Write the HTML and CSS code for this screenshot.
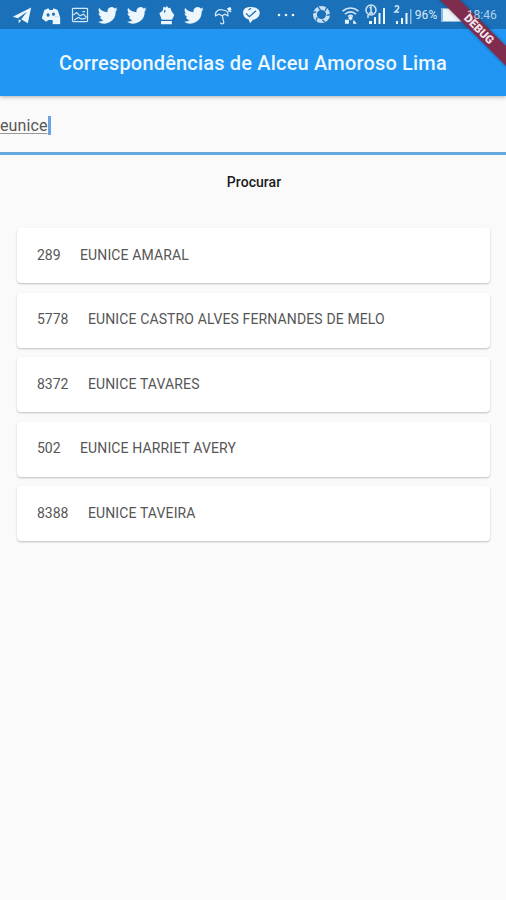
FILE: index.html
```html
<!DOCTYPE html>
<html lang="pt">
<head>
<meta charset="utf-8">
<title>Correspondências</title>
<link rel="stylesheet" href="styles.css">
</head>
<body>
<svg class="defs" width="0" height="0"><defs>
<path id="bird" d="M23.6 4.9c-.9.4-1.800.7-2.800.8 1-.6 1.800-1.600 2.200-2.700-.9.6-2 1-3.100 1.200a4.900 4.900 0 0 0-8.400 4.500C7.400 8.500 3.800 6.500 1.400 3.600c-1.300 2.300-.7 5.100 1.500 6.600-.8 0-1.600-.2-2.200-.6 0 2.300 1.600 4.400 3.900 4.900-.7.2-1.500.2-2.200.1.600 2 2.400 3.400 4.600 3.400A9.900 9.900 0 0 1-.3 20a13.900 13.900 0 0 0 21.500-12.400c1-.7 1.800-1.600 2.400-2.700z"/>
</defs></svg>
<header class="top">
  <div class="status">
    <div class="notices">
      <svg viewBox="0 0 24 24"><path d="M1 14 23 3 19 22 11 17 18 8 7 16zM8 17l3 2-3 3z"/></svg>
      <svg viewBox="0 0 24 24"><path d="M4 6 9 4l1 2h4l1-2 5 2 3 9-5 5-3-2H9l-3 2-5-4z"/><ellipse class="cut" cx="8.500" cy="12" rx="1.800" ry="2"/><ellipse class="cut" cx="15" cy="11" rx="1.800" ry="2"/><path d="M14 15h9v8h-9z"/><path class="line thin" d="M16 15v-1h5v1"/></svg>
      <svg viewBox="0 0 24 24"><rect class="line thin" x="3" y="4" width="18" height="16" rx="1"/><path class="line thin" d="m4 12 4-3 4 4 4-2 4 4M5 18l5-3 4 2 5-1M15 8h3"/></svg>
      <svg viewBox="0 0 24 24"><use href="#bird"/></svg>
      <svg viewBox="0 0 24 24"><use href="#bird"/></svg>
      <svg viewBox="0 0 24 24"><path d="m4 10 4-3 1-5 3 1 1-2 2 3 2-1 2 5 3 4-3 6H7zM6 19h13v4H6z"/><path class="cutline" d="M6 18.500h13M10 9l1-3"/></svg>
      <svg viewBox="0 0 24 24"><use href="#bird"/></svg>
      <svg viewBox="0 0 24 24"><path class="line thin" d="M3 13c-1-5 4-9 9-7 4 0 7 3 6 7l-4-2-3 2-4-2zM11 12l2 9c0 2-4 2-4 0M17 5l4-2M18 7l4 1"/><circle cx="20" cy="5" r="2"/></svg>
      <svg viewBox="0 0 24 24"><path d="M5 4c5-3 14-2 17 3 2 6-3 10-8 11l-3 4-2-5C3 16 0 8 5 4z"/><path class="cutline" d="m6 10 4 4 8-7M9 6l3-2"/></svg>
    </div>
    <svg class="dots" viewBox="0 0 20 20"><circle cx="3" cy="10" r="1.300"/><circle cx="10" cy="10" r="1.300"/><circle cx="17" cy="10" r="1.300"/></svg>
    <svg class="sync" viewBox="0 0 24 24"><circle class="ring" cx="12" cy="12" r="7.500"/><path class="cutline" d="m8 3 3 4M18 4l-2 4M22 12l-4 1M16 21l-3-3M6 19l1-4M2 10l4-1"/></svg>
    <svg class="wifi" viewBox="0 0 24 24"><path class="line" d="M2 7c6-5 14-5 20 0M5 11c4-4 10-4 14 0M9 14c2-2 4-2 6 0"/><path d="m12 13 3 3-3 3-3-3zM5 18h5v5H5zM16 18l4 5h-5z"/></svg>
    <svg class="signal" viewBox="0 0 22 22"><circle class="line thin" cx="6" cy="6" r="5"/><path class="line thin" d="m4.500 4 1.500-1v6M4 9h4M3 14v-3"/><path d="M4 17h3v3H4zM9 13h2v7H9zM13.500 9h2v11h-2zM18 4h2v16h-2z"/></svg>
    <svg class="signal second" viewBox="0 0 22 22"><path class="line thin" d="M2 3c2-3 5 0 3 2L2 8h4"/><path d="M3 17h2v3H3zM8 14h2v6H8zM12.500 9h2v11h-2z"/><path class="faint" d="M17 5h1.500v15H17z"/></svg>
    <span class="percent">96%</span>
    <svg class="battery" viewBox="0 0 24 16"><rect class="faint" x="0" y="1" width="21" height="14"/><path d="M2 2h17v12H2zM21 5h2v6h-2z"/></svg>
    <time>18:46</time>
  </div>
  <h1>Correspondências de Alceu Amoroso Lima</h1>
</header>
<div class="ribbon"><span>DEBUG</span></div>
<main>
  <div class="field"><span class="query">eunice</span><i class="caret"></i></div>
  <button class="search">Procurar</button>
  <ul class="results">
    <li><span>289</span><b>EUNICE AMARAL</b></li>
    <li><span>5778</span><b>EUNICE CASTRO ALVES FERNANDES DE MELO</b></li>
    <li><span>8372</span><b>EUNICE TAVARES</b></li>
    <li><span>502</span><b>EUNICE HARRIET AVERY</b></li>
    <li><span>8388</span><b>EUNICE TAVEIRA</b></li>
  </ul>
</main>
</body>
</html>
```
FILE: styles.css
```css
* { box-sizing: border-box; }
body {
  margin: 0;
  height: 900px;
  position: relative;
  overflow: hidden;
  background: #fafafa;
  font-family: Roboto, sans-serif;
  color: #565656;
}
.defs { position: absolute; }
.top {
  height: 96px;
  background: #2196f3;
  box-shadow: 0 1px 4px rgba(0, 0, 0, .3);
}
.status {
  height: 29px;
  display: flex;
  align-items: center;
  padding-left: 8px;
  background: #1a70b9;
  color: #dcebf7;
  font-size: 12px;
}
.status svg { flex: none; fill: #edf6fc; }
.notices {
  display: grid;
  grid-template-columns: repeat(9, 28.65px);
  justify-items: center;
}
.notices svg { width: 20px; height: 20px; }
.status .line { fill: none; stroke: #d3e7f6; stroke-width: 2; }
.status .thin { stroke-width: 1.5; }
.status .cut { fill: #1a70b9; }
.status .cutline { fill: none; stroke: #1a70b9; stroke-width: 1.5; }
.status .ring { fill: none; stroke: #c8e0f1; stroke-width: 4.5; }
.status .faint { fill: #8bb8dc; }
.dots { width: 20px; height: 20px; margin-left: 10px; }
.sync { width: 21px; height: 21px; margin-left: 15px; }
.wifi { width: 19px; height: 20px; margin-left: 9px; }
.signal { width: 22px; height: 22px; margin-left: 5px; }
.second { margin-left: 6px; }
.percent { width: 24px; letter-spacing: .1px; }
.battery { width: 24px; height: 16px; margin-left: 2px; }
.status time {
  position: relative;
  z-index: 1;
  margin-left: 2px;
  color: rgba(220, 235, 247, .8);
}
h1 {
  margin: 0;
  height: 67px;
  line-height: 68px;
  padding-left: 59px;
  font-size: 20px;
  font-weight: 500;
  letter-spacing: .18px;
  color: #edf8ff;
  white-space: nowrap;
}
.ribbon {
  position: absolute;
  left: 419px;
  top: 22px;
  width: 120px;
  height: 14px;
  transform: rotate(45deg);
  background: #802c4e;
  box-shadow: 0 0 4px rgba(0, 0, 0, .3);
  color: #f3e4eb;
  text-align: center;
  font-size: 11.5px;
  line-height: 14px;
  font-weight: 900;
}
.field {
  height: 59px;
  display: flex;
  align-items: center;
  padding-top: 3px;
  border-bottom: 3px solid #65a8de;
}
.query {
  font-size: 16px;
  line-height: 19px;
  letter-spacing: .1px;
  text-decoration: underline;
  text-decoration-color: #999;
  text-underline-offset: 2px;
}
.caret { width: 3px; height: 19px; background: #6fa3df; }
.search {
  display: block;
  width: 88px;
  height: 36px;
  margin: 9px auto 28px 210px;
  padding: 0;
  border: 0;
  background: none;
  font: 500 14px Roboto, sans-serif;
  letter-spacing: .05px;
  color: #1c1c1c;
}
.results {
  margin: 0;
  padding: 0 16px 0 17px;
  list-style: none;
  display: grid;
  gap: 9.6px;
}
.results li {
  height: 55px;
  display: flex;
  align-items: center;
  gap: 19.4px;
  padding: 0 0 2px 20px;
  border-radius: 4px;
  background: #fff;
  box-shadow: 0 1px 2px rgba(0, 0, 0, .24);
  font-size: 14px;
}
.results b { font-weight: 400; letter-spacing: .13px; }
```
